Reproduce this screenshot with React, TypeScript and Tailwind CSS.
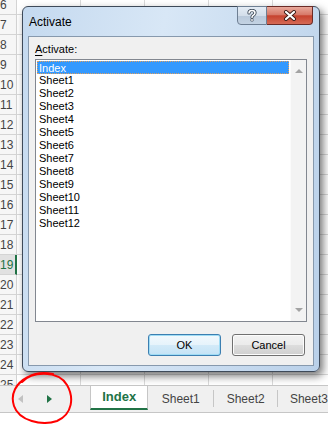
const rows = [6, 7, 8, 9, 10, 11, 12, 13, 14, 15, 16, 17, 18, 19, 20, 21, 22, 23, 24, 25];
const cols = [0, 1, 2, 3, 4];
const sheets = ["Index", "Sheet1", "Sheet2", "Sheet3", "Sheet4", "Sheet5", "Sheet6", "Sheet7", "Sheet8", "Sheet9", "Sheet10", "Sheet11", "Sheet12"];

function WinButton({ label, focused }: { label: string; focused?: boolean }) {
  return (
    <div
      className={
        focused
          ? "w-[73px] h-[22px] rounded-[3px] border border-[#3c7fb1] shadow-[inset_0_0_0_1px_#9fdcf5] bg-[linear-gradient(#f2f9fd_0%,#e6f3fb_49%,#d3eaf8_50%,#c4e3f6_100%)] flex items-center justify-center text-[11px] text-black"
          : "w-[73px] h-[22px] rounded-[3px] border border-[#707070] shadow-[inset_0_0_0_1px_#fcfcfc] bg-[linear-gradient(#f2f2f2_0%,#ebebeb_49%,#dddddd_50%,#cfcfcf_100%)] flex items-center justify-center text-[11px] text-black"
      }
    >
      {label}
    </div>
  );
}

export default function App() {
  return (
    <div className="relative w-[328px] h-[424px] overflow-hidden bg-white font-['Liberation_Sans',Arial,sans-serif]">
      {/* sheet grid */}
      <div className="h-[385px] overflow-hidden">
        <div className="-mt-[5px]">
          {rows.map((r) => (
            <div key={r} className="flex h-[20px]">
              <div
                className={
                  r === 19
                    ? "w-[17px] shrink-0 bg-[#e1e1e1] border-b border-b-[#d4d4d4] border-r-2 border-r-[#217346] flex items-center text-[12px] text-[#217346] leading-none"
                    : "w-[17px] shrink-0 bg-[#f6f6f6] border-b border-r border-[#d4d4d4] flex items-center text-[12px] text-[#444] leading-none"
                }
              >
                {r}
              </div>
              {cols.map((c) => (
                <div key={c} className="w-[64px] shrink-0 border-b border-r border-[#dadada]" />
              ))}
            </div>
          ))}
        </div>
      </div>

      {/* sheet tabs */}
      <div className="flex items-start h-[28px] bg-[#f0f0f0] border-t border-b border-[#c6c6c6]">
        <div className="w-[91px] h-full flex items-center pl-[18px]">
          <div className="w-0 h-0 border-y-[4px] border-y-transparent border-r-[5px] border-r-[#c2c2c2]" />
          <div className="ml-[24px] w-0 h-0 border-y-[4px] border-y-transparent border-l-[5px] border-l-[#217346]" />
        </div>
        <div className="w-[58px] h-[24px] bg-white border-x border-[#c6c6c6] border-b-2 border-b-[#217346] flex items-center justify-center text-[13px] font-bold text-[#217346]">
          Index
        </div>
        <div className="w-[66px] h-full flex items-center justify-center text-[12px] text-[#444]">Sheet1</div>
        <div className="w-px h-[17px] mt-[4px] bg-[#c6c6c6]" />
        <div className="w-[63px] h-full flex items-center justify-center text-[12px] text-[#444]">Sheet2</div>
        <div className="w-px h-[17px] mt-[4px] bg-[#c6c6c6]" />
        <div className="h-full flex items-center pl-[12px] text-[12px] text-[#444] whitespace-nowrap">Sheet3</div>
      </div>

      {/* Activate dialog */}
      <div className="absolute left-[22px] top-[6px] w-[298px] h-[366px] rounded-[6px] border border-[#3e4a59] bg-[linear-gradient(100deg,#c4d9ef_0%,#d8e7f6_40%,#c9dcf0_70%,#b9d0e9_100%)] shadow-[3px_4px_8px_rgba(0,0,0,0.55)]">
        <div className="h-[29px] flex items-center pl-[6px] text-[12px] text-black">Activate</div>

        <div className="absolute right-[6px] -top-px flex">
          <div className="w-[30px] h-[19px] rounded-bl-[4px] border border-[#6e7f93] bg-[linear-gradient(#e4ecf5_0%,#d3deea_50%,#b8c8da_51%,#c4d3e3_100%)] flex items-center justify-center">
            <svg width="10" height="13" viewBox="0 0 10 13">
              <path d="M2 4 Q2 1.5 5 1.5 Q8 1.5 8 4 Q8 5.5 6 6.5 Q5 7 5 8.5" fill="none" stroke="#3b4756" strokeWidth="3.2" strokeLinecap="round" />
              <circle cx="5" cy="11" r="1.6" fill="#3b4756" />
              <path d="M2 4 Q2 1.5 5 1.5 Q8 1.5 8 4 Q8 5.5 6 6.5 Q5 7 5 8.5" fill="none" stroke="#ffffff" strokeWidth="1.5" strokeLinecap="round" />
              <circle cx="5" cy="11" r="0.9" fill="#ffffff" />
            </svg>
          </div>
          <div className="w-[46px] h-[19px] rounded-br-[4px] border border-l-0 border-[#6b2b26] bg-[linear-gradient(#e9a99b_0%,#d77a6a_45%,#c6432f_52%,#d66a55_100%)] flex items-center justify-center">
            <svg width="14" height="11" viewBox="0 0 14 11">
              <path d="M3 2 L11 9 M11 2 L3 9" stroke="#3a1a17" strokeWidth="4" strokeLinecap="round" />
              <path d="M3 2 L11 9 M11 2 L3 9" stroke="#ffffff" strokeWidth="2.2" strokeLinecap="round" />
            </svg>
          </div>
        </div>

        <div className="ml-[5px] w-[286px] h-[330px] border border-[#8799ad] bg-[#f0f0f0] flex flex-col pl-[6px] pr-[6px] pt-[6px] text-[11px] text-black">
          <div className="h-[13px] leading-[13px] mb-[3px]">
            <span className="underline underline-offset-2">A</span>ctivate:
          </div>
          <div className="h-[263px] border border-[#828790] bg-white flex">
            <div className="flex-1 flex flex-col pt-[1px]">
              {sheets.map((s, i) => (
                <div
                  key={s}
                  className={
                    i === 0
                      ? "mx-px h-[13px] leading-[12px] px-[1px] bg-[#3399ff] text-white border border-dotted border-[#e0a060]"
                      : "mx-px h-[13px] leading-[13px] px-[2px]"
                  }
                >
                  {s}
                </div>
              ))}
            </div>
            <div className="w-[16px] bg-[#f3f3f3] border-l border-[#fbfbfb] flex flex-col items-center justify-between py-[9px]">
              <div className="w-0 h-0 border-x-[4px] border-x-transparent border-b-[4px] border-b-[#a3a3a3]" />
              <div className="w-0 h-0 border-x-[4px] border-x-transparent border-t-[4px] border-t-[#a3a3a3]" />
            </div>
          </div>
          <div className="mt-[12px] flex justify-end gap-[11px] pr-[2px]">
            <WinButton label="OK" focused />
            <WinButton label="Cancel" />
          </div>
        </div>
      </div>

      {/* red hand-drawn circle */}
      <svg className="absolute left-0 top-0 pointer-events-none" width="328" height="424" viewBox="0 0 328 424">
        <path
          d="M22 382 C32 371 58 370 67 385 C74 397 73 414 57 421 C42 426 19 421 14 406 C10 394 16 383 28 377 C35 373 44 372 53 374"
          fill="none"
          stroke="#ff0000"
          strokeWidth="2"
          strokeLinecap="round"
        />
      </svg>
    </div>
  );
}
